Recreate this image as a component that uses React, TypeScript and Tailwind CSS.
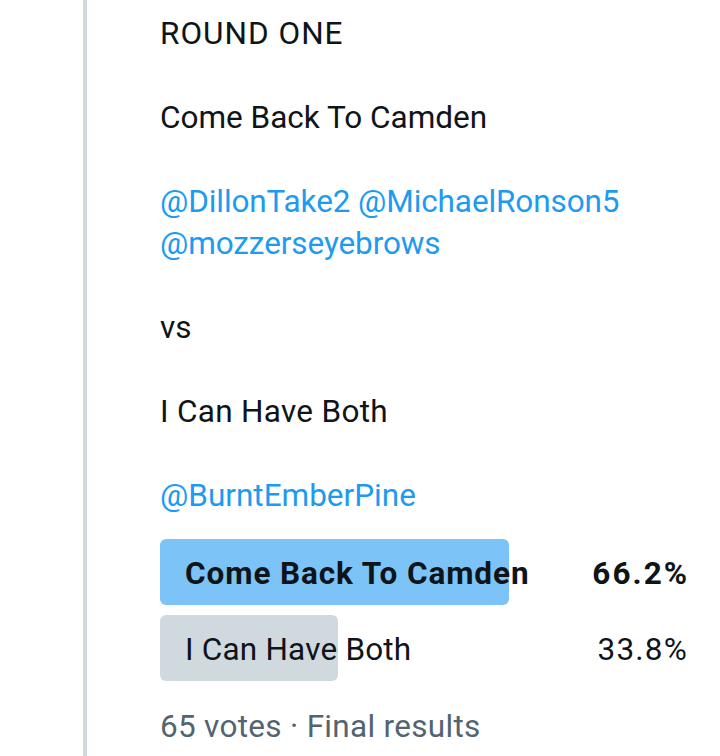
const options = [
  { label: 'Come Back To Camden', percent: 66.2, winner: true },
  { label: 'I Can Have Both', percent: 33.8, winner: false },
];

export default function App() {
  return (
    <div
      className="flex w-[720px] h-[756px] bg-white text-[#0f1419] overflow-hidden"
      style={{ fontFamily: 'Roboto, "Noto Sans", sans-serif' }}
    >
      <div className="pl-[83px] flex">
        <div className="w-1 bg-[#cfd9de]" />
      </div>

      <div className="ml-[73px] w-[527px] pt-[13px] text-[31.5px] leading-[42px]">
        <div className="mb-[42px] tracking-[1px]">ROUND ONE</div>
        <div className="mb-[42px]">Come Back To Camden</div>
        <div className="mb-[42px] text-[#1d9bf0] tracking-[-0.1px]">
          @DillonTake2 @MichaelRonson5
          <br />
          @mozzerseyebrows
        </div>
        <div className="mb-[42px]">vs</div>
        <div className="mb-[42px] tracking-[0.3px]">I Can Have Both</div>
        <div className="text-[#1d9bf0]">@BurntEmberPine</div>

        <div className="mt-[22px] flex flex-col gap-[10px]">
          {options.map((opt) => (
            <div key={opt.label} className="relative flex items-center h-[66px] pt-[4px]">
              <div
                className={`absolute left-0 top-0 bottom-0 rounded-[6px] ${
                  opt.winner ? 'bg-[#7cc4f8]' : 'bg-[#cfd9de]'
                }`}
                style={{ width: `${opt.percent}%` }}
              />
              <span
                className={`relative pl-[25px] ${
                  opt.winner ? 'font-bold tracking-[0.9px]' : 'tracking-[0.2px]'
                }`}
              >
                {opt.label}
              </span>
              <span
                className={`relative ml-auto ${
                  opt.winner ? 'font-bold tracking-[2px] -mr-[2px]' : 'tracking-[1.2px] -mr-[1px]'
                }`}
              >
                {opt.percent.toFixed(1)}%
              </span>
            </div>
          ))}
        </div>

        <div className="mt-[25px] text-[#536471] tracking-[0.3px]">65 votes · Final results</div>
      </div>
    </div>
  );
}
